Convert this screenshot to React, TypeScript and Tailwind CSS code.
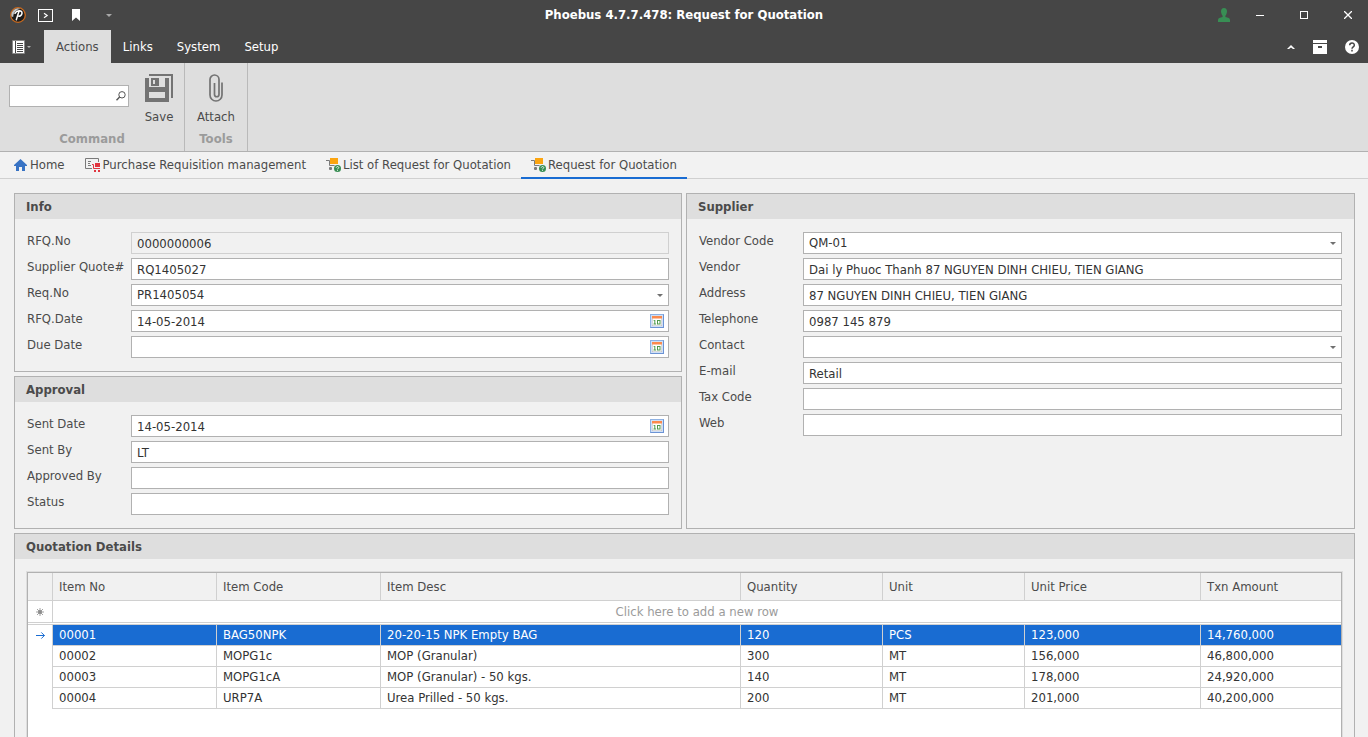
import type { ReactNode } from "react";

function Caret({ className = "" }: { className?: string }) {
  return (
    <svg width="6" height="3" viewBox="0 0 6 3" className={className} aria-hidden="true">
      <path d="M0 0h6L3 3z" fill="currentColor" />
    </svg>
  );
}

function Logo() {
  return (
    <svg width="16" height="16" viewBox="0 0 16 16" aria-hidden="true">
      <circle cx="8" cy="8" r="7.3" fill="#1d1d1d" stroke="#c96a1e" strokeWidth="1.3" />
      <path d="M1.5 9.5A6.6 6.6 0 0 1 10.500 1.900C6 2.500 3.500 5 3.200 10z" fill="#c4c4c4" />
      <path d="M9 4.200 6.300 12.800M5 6.300C6.500 3.300 12.400 2.800 12 6.300c-.3 2.300-2.400 3.300-4.200 2.600" fill="none" stroke="#fff" strokeWidth="1.500" strokeLinecap="round" />
    </svg>
  );
}

function CalendarIcon() {
  return (
    <svg width="14" height="14" viewBox="0 0 14 14" aria-hidden="true">
      <rect width="14" height="14" fill="#6c93d4" />
      <path d="M0 0h14L0 14z" fill="#8fb2e3" />
      <rect x="1" y="1" width="12" height="12" fill="#cfe0f7" />
      <rect x="2" y="2" width="10" height="10" fill="#b9b4b4" />
      <rect x="2.500" y="4" width="9" height="7.500" fill="#fff" />
      <rect x="2" y="2" width="10" height="2.500" fill="#fb8a4d" />
      <path d="M4.800 6v4M3.700 6.500h1M3.500 10h2.600" fill="none" stroke="#4f9a4a" />
      <rect x="7.500" y="6.500" width="2.500" height="3.500" fill="none" stroke="#4f9a4a" />
    </svg>
  );
}

function CartIcon() {
  return (
    <svg width="15" height="14" viewBox="0 0 15 14" className="shrink-0" aria-hidden="true">
      <path d="M0 2.500h3.500v5H13" fill="none" stroke="#7a7a7a" />
      <rect x="4" y="0" width="8" height="6" fill="#fca510" />
      <rect x="3" y="9" width="3" height="3" rx="1" fill="#7a7a7a" />
      <circle cx="11.500" cy="10.500" r="4.200" fill="#f2f2f2" />
      <circle cx="11.500" cy="10.500" r="3.500" fill="#388e54" />
      <path d="M10.300 9.700c0-1.600 2.500-1.500 2.400 0 0 .8-1.200.7-1.200 1.600M11.500 11.900v.9" fill="none" stroke="#fff" strokeWidth=".9" />
    </svg>
  );
}

function HomeIcon() {
  return (
    <svg width="13" height="12" viewBox="0 0 13 12" className="shrink-0" aria-hidden="true">
      <path d="M6.500 0 13 6v1h-2v5H8V8H5v4H2V7H0V6z" fill="#3873c4" />
    </svg>
  );
}

function RequisitionIcon() {
  return (
    <svg width="16" height="14" viewBox="0 0 16 14" className="shrink-0" aria-hidden="true">
      <path d="M7 10.500H.5V.5h13V4" fill="none" stroke="#7a7a7a" />
      <path d="M3 3.500h3M3 5.500h2M3 7.500h3" stroke="#7a7a7a" />
      <path d="M7 6.500h1.500v4H15" fill="none" stroke="#e0353f" />
      <path d="M10 5h5v4h-5zM9 12h2v2H9zM13 12h2v2h-2z" fill="#e0353f" />
    </svg>
  );
}

function Panel({ title, children, className = "" }: { title: string; children: ReactNode; className?: string }) {
  return (
    <section className={`flex flex-col border border-[#b1b1b1] ${className}`}>
      <h2 className="h-[25px] shrink-0 bg-[#dedede] px-[11px] leading-[25px] font-bold text-[#4b4b4b]">{title}</h2>
      {children}
    </section>
  );
}

type FieldData = { id: string; label: string; value?: string; kind?: "text" | "select" | "date" | "readonly" };

function Field({ id, label, value = "", kind = "text" }: FieldData) {
  const box = "h-[22px] w-full border bg-white px-[5px] text-[#333] outline-none";
  return (
    <div className="flex">
      <label htmlFor={id} className="w-[104px] shrink-0 leading-[18px] whitespace-nowrap">
        {label}
      </label>
      <div className="relative min-w-0 flex-1">
        {kind === "select" ? (
          <>
            <select id={id} defaultValue={value} className={`${box} appearance-none border-[#b1b1b1]`}>
              <option value={value}>{value}</option>
            </select>
            <Caret className="pointer-events-none absolute top-[10px] right-[6px] text-[#707070]" />
          </>
        ) : kind === "readonly" ? (
          <input id={id} readOnly defaultValue={value} className="h-[22px] w-full border border-[#d0d0d0] bg-transparent px-[5px] text-[#333] outline-none" />
        ) : (
          <input id={id} type="text" defaultValue={value} className={`${box} border-[#b1b1b1]`} />
        )}
        {kind === "date" && (
          <button type="button" aria-label={`Pick ${label}`} className="absolute top-1 right-[5px]">
            <CalendarIcon />
          </button>
        )}
      </div>
    </div>
  );
}

function Fields({ items }: { items: FieldData[] }) {
  return (
    <div className="flex flex-col gap-1 px-3 py-[13px]">
      {items.map((f) => (
        <Field key={f.id} {...f} />
      ))}
    </div>
  );
}

const info: FieldData[] = [
  { id: "rfq-no", label: "RFQ.No", value: "0000000006", kind: "readonly" },
  { id: "supplier-quote", label: "Supplier Quote#", value: "RQ1405027" },
  { id: "req-no", label: "Req.No", value: "PR1405054", kind: "select" },
  { id: "rfq-date", label: "RFQ.Date", value: "14-05-2014", kind: "date" },
  { id: "due-date", label: "Due Date", kind: "date" },
];

const approval: FieldData[] = [
  { id: "sent-date", label: "Sent Date", value: "14-05-2014", kind: "date" },
  { id: "sent-by", label: "Sent By", value: "LT" },
  { id: "approved-by", label: "Approved By" },
  { id: "status", label: "Status" },
];

const supplier: FieldData[] = [
  { id: "vendor-code", label: "Vendor Code", value: "QM-01", kind: "select" },
  { id: "vendor", label: "Vendor", value: "Dai ly Phuoc Thanh 87 NGUYEN DINH CHIEU, TIEN GIANG" },
  { id: "address", label: "Address", value: "87 NGUYEN DINH CHIEU, TIEN GIANG" },
  { id: "telephone", label: "Telephone", value: "0987 145 879" },
  { id: "contact", label: "Contact", kind: "select" },
  { id: "email", label: "E-mail", value: "Retail" },
  { id: "tax-code", label: "Tax Code" },
  { id: "web", label: "Web" },
];

const columns = ["Item No", "Item Code", "Item Desc", "Quantity", "Unit", "Unit Price", "Txn Amount"];

const rows = [
  ["00001", "BAG50NPK", "20-20-15 NPK Empty BAG", "120", "PCS", "123,000", "14,760,000"],
  ["00002", "MOPG1c", "MOP (Granular)", "300", "MT", "156,000", "46,800,000"],
  ["00003", "MOPG1cA", "MOP (Granular) - 50 kgs.", "140", "MT", "178,000", "24,920,000"],
  ["00004", "URP7A", "Urea Prilled - 50 kgs.", "200", "MT", "201,000", "40,200,000"],
];

function TitleBar() {
  return (
    <div className="grid h-[30px] grid-cols-[1fr_auto_1fr] items-center">
      <div className="flex items-center pl-[10px]">
        <Logo />
        <button type="button" aria-label="Run command" className="ml-3">
          <svg width="15" height="13" viewBox="0 0 15 13">
            <rect x=".5" y=".5" width="14" height="12" fill="none" stroke="#fff" />
            <path d="m6 4.200 3.200 2.300L6 8.800" fill="none" stroke="#fff" strokeWidth="1.200" />
          </svg>
        </button>
        <button type="button" aria-label="Bookmark" className="ml-[19px]">
          <svg width="8" height="12" viewBox="0 0 8 12">
            <path d="M0 0h8v12L4 8.500 0 12z" fill="#fff" />
          </svg>
        </button>
        <button type="button" aria-label="Customize toolbar" className="ml-[26px] text-[#a8a8a8]">
          <Caret />
        </button>
      </div>
      <h1 className="font-bold whitespace-nowrap">Phoebus 4.7.7.478: Request for Quotation</h1>
      <div className="flex justify-end gap-1">
        <button type="button" aria-label="Account" className="flex h-7 w-6 items-center justify-center">
          <svg width="12" height="14" viewBox="0 0 12 14">
            <path d="M6 0c2 0 3 1.300 3 3.300S7.800 7.500 7.400 7.700v1.200C10 9.400 12 10 12 12v2H0v-2c0-2 2-2.600 4.600-3.100V7.700C4.200 7.500 3 5.300 3 3.300S4 0 6 0z" fill="#388e54" />
          </svg>
        </button>
        <button type="button" aria-label="Minimize" className="flex h-7 w-10 items-center justify-center">
          <svg width="8" height="8" viewBox="0 0 8 8"><path d="M0 4.500h8" stroke="#fff" /></svg>
        </button>
        <button type="button" aria-label="Maximize" className="flex h-7 w-10 items-center justify-center">
          <svg width="8" height="8" viewBox="0 0 8 8"><rect x=".5" y=".5" width="7" height="7" fill="none" stroke="#fff" /></svg>
        </button>
        <button type="button" aria-label="Close" className="flex h-7 w-10 items-center justify-center">
          <svg width="8" height="8" viewBox="0 0 8 8"><path d="m0 0 8 8M8 0 0 8" stroke="#fff" strokeWidth="1.300" /></svg>
        </button>
      </div>
    </div>
  );
}

function RibbonTabs() {
  return (
    <div className="flex h-[33px] items-stretch">
      <button type="button" aria-label="Application menu" className="flex w-11 items-center gap-[2px] pl-3">
        <svg width="13" height="14" viewBox="0 0 13 14">
          <path d="M.5.500h12v13H.5z" fill="none" stroke="#8a8a8a" />
          <path d="M1 1h2v12H1zM4 1h8v12H4z" fill="#fff" />
          <path d="M5 3.500h6M5 5.500h6M5 7.500h6M5 9.500h6M5 11.500h6" stroke="#464646" />
        </svg>
        <svg width="4" height="2" viewBox="0 0 4 2" className="text-[#b0b0b0]"><path d="M0 0h4L2 2z" fill="currentColor" /></svg>
      </button>
      <nav className="flex flex-1">
        <button type="button" className="bg-[#dedede] px-3 text-[#4b4b4b]">Actions</button>
        <button type="button" className="px-3">Links</button>
        <button type="button" className="px-3">System</button>
        <button type="button" className="px-3">Setup</button>
      </nav>
      <div className="flex items-center gap-2 pr-1">
        <button type="button" aria-label="Collapse ribbon" className="flex w-[18px] justify-center">
          <svg width="8" height="4" viewBox="0 0 8 4"><path d="M0 4 4 0l4 4H6L4 2.500 2 4z" fill="#fff" /></svg>
        </button>
        <button type="button" aria-label="Archive" className="flex w-6 justify-center">
          <svg width="14" height="14" viewBox="0 0 14 14">
            <path d="M0 0h14v3H0zM0 4h14v10H0z" fill="#fff" />
            <path d="M5 6h4v2H5z" fill="#464646" />
          </svg>
        </button>
        <button type="button" aria-label="Help" className="flex w-6 justify-center">
          <svg width="14" height="14" viewBox="0 0 14 14">
            <circle cx="7" cy="7" r="7" fill="#fff" />
            <path d="M4.700 5.300C4.700 2.200 9.400 2.300 9.300 5.200c0 1.600-2.300 1.700-2.300 3.500M7 9.700v1.800" fill="none" stroke="#464646" strokeWidth="1.500" />
          </svg>
        </button>
      </div>
    </div>
  );
}

function Ribbon() {
  return (
    <div className="flex h-[89px] border-b border-[#b1b1b1] bg-[#dedede]">
      <div className="flex w-[185px] flex-col border-r border-[#b9b9b9]">
        <div className="flex h-[66px] items-center gap-[5px] pl-[9px]">
          <div className="relative w-[120px] shrink-0">
            <input type="search" aria-label="Search commands" className="block h-[22px] w-full border border-[#b1b1b1] bg-white px-1 outline-none" />
            <svg width="10" height="10" viewBox="0 0 10 10" className="pointer-events-none absolute top-[6px] right-[3px]">
              <circle cx="6" cy="3.800" r="3.200" fill="none" stroke="#555" />
              <path d="M3.600 6 .5 9.300" stroke="#555" strokeWidth="1.400" />
            </svg>
          </div>
          <button type="button" className="flex h-[66px] w-[50px] flex-col items-center gap-[6px] pt-[11px] leading-[18px]">
            <svg width="28" height="28" viewBox="0 0 28 28" aria-hidden="true">
              <path d="M4 1h23v23" fill="none" stroke="#737373" strokeWidth="2" />
              <path d="M0 4h4v9h16V4h4v24H0zM4 18v6h16v-6z" fill="#737373" fillRule="evenodd" />
              <path d="M6 4h8v8H6zM8 6v4h2V6z" fill="#737373" fillRule="evenodd" />
            </svg>
            Save
          </button>
        </div>
        <span className="self-center font-bold text-[#9b9b9b]">Command</span>
      </div>
      <div className="flex w-[63px] flex-col items-center border-r border-[#b9b9b9]">
        <button type="button" className="flex h-[66px] w-full flex-col items-center gap-[6px] pt-[11px] leading-[18px]">
          <svg width="14" height="28" viewBox="0 0 14 28" aria-hidden="true">
            <path d="M13 8.500v12.500a6 6 0 0 1-12 0V5.500a4.500 4.500 0 0 1 9 0V20.500a2.250 2.250 0 0 1-4.500 0V9" fill="none" stroke="#737373" strokeWidth="1.700" />
          </svg>
          Attach
        </button>
        <span className="font-bold text-[#9b9b9b]">Tools</span>
      </div>
    </div>
  );
}

const documents = [
  { title: "Home", icon: <HomeIcon />, gap: "gap-[3px]" },
  { title: "Purchase Requisition management", icon: <RequisitionIcon />, gap: "gap-[2px]" },
  { title: "List of Request for Quotation", icon: <CartIcon />, gap: "gap-[2px]" },
  { title: "Request for Quotation", icon: <CartIcon />, gap: "gap-[2px]", active: true },
];

function DocumentTabs() {
  return (
    <nav className="flex h-[27px] border-b border-[#d0d0d0] bg-[#f2f2f2] pl-1">
      {documents.map((d) => (
        <a
          key={d.title}
          href="#"
          className={`flex h-[27px] items-center border-b-2 px-[10px] whitespace-nowrap ${d.gap} ${d.active ? "border-[#196cd2]" : "border-transparent"}`}
        >
          {d.icon}
          {d.title}
        </a>
      ))}
    </nav>
  );
}

function DetailsGrid() {
  return (
    <div className="flex flex-1 flex-col px-[11px] pt-3">
      <div className="flex flex-1 border border-b-0 border-[#dedede]">
        <div className="flex-1 border border-b-0 border-[#b1b1b1] bg-white">
          <table className="w-full table-fixed border-separate border-spacing-0 text-left">
            <colgroup>
              <col className="w-[25px]" />
              <col className="w-[164px]" />
              <col className="w-[164px]" />
              <col />
              <col className="w-[142px]" />
              <col className="w-[142px]" />
              <col className="w-[176px]" />
              <col className="w-[140px]" />
            </colgroup>
            <thead className="bg-[#f1f1f1]">
              <tr className="h-7">
                <th aria-label="Row state" className="border-r border-b border-[#d0d0d0] p-0" />
                {columns.map((c) => (
                  <th key={c} className="border-r border-b border-[#d0d0d0] px-[6px] py-0 font-normal last:border-r-0">
                    {c}
                  </th>
                ))}
              </tr>
            </thead>
            <tbody className="text-[#333]">
              <tr className="h-[22px]">
                <td className="border-r border-b border-[#d0d0d0] p-0">
                  <svg width="8" height="8" viewBox="0 0 8 8" className="mx-auto block text-[#8c8c8c]" aria-hidden="true">
                    <path d="M4 0v8M0 4h8M1 1l6 6M7 1 1 7" stroke="currentColor" strokeWidth=".8" />
                    <circle cx="4" cy="4" r="2" fill="currentColor" />
                  </svg>
                </td>
                <td colSpan={7} className="border-b border-[#d0d0d0] p-0 text-center text-[#9b9b9b]">
                  Click here to add a new row
                </td>
              </tr>
              <tr className="h-[2px]" aria-hidden="true">
                <td colSpan={8} className="border-b border-[#d0d0d0] p-0" />
              </tr>
              {rows.map((r, i) => (
                <tr key={r[0]} className={i === 0 ? "h-[21px] text-white" : "h-[21px]"}>
                  <td className="border-r border-[#d0d0d0] p-0">
                    {i === 0 && (
                      <svg width="9" height="7" viewBox="0 0 9 7" className="mx-auto block" aria-hidden="true">
                        <path d="M0 3.500h8.500M5.300.4l3.100 3.100-3.100 3.100" fill="none" stroke="#196cd2" />
                      </svg>
                    )}
                  </td>
                  {r.map((v, j) => (
                    <td
                      key={columns[j]}
                      className={`border-r border-b border-[#d0d0d0] px-[6px] py-0 leading-5 whitespace-nowrap last:border-r-0 ${i === 0 ? "bg-[#196cd2]" : ""}`}
                    >
                      {v}
                    </td>
                  ))}
                </tr>
              ))}
            </tbody>
          </table>
        </div>
      </div>
    </div>
  );
}

export default function App() {
  return (
    <div className="flex h-screen flex-col overflow-hidden bg-[#f1f1f1] font-['DejaVu_Sans_Condensed','DejaVu_Sans',sans-serif] text-[13px] leading-5 text-[#4b4b4b]">
      <header className="shrink-0 bg-[#464646] text-white">
        <TitleBar />
        <RibbonTabs />
        <div className="text-[#4b4b4b]">
          <Ribbon />
          <DocumentTabs />
        </div>
      </header>
      <main className="flex flex-1 flex-col gap-1 pt-[14px] pr-[13px] pl-[14px]">
        <div className="grid grid-cols-[minmax(0,668fr)_minmax(0,669fr)] gap-1">
          <div className="flex flex-col gap-1">
            <Panel title="Info">
              <Fields items={info} />
            </Panel>
            <Panel title="Approval">
              <Fields items={approval} />
            </Panel>
          </div>
          <Panel title="Supplier">
            <Fields items={supplier} />
          </Panel>
        </div>
        <Panel title="Quotation Details" className="flex-1 border-b-0">
          <DetailsGrid />
        </Panel>
      </main>
    </div>
  );
}
